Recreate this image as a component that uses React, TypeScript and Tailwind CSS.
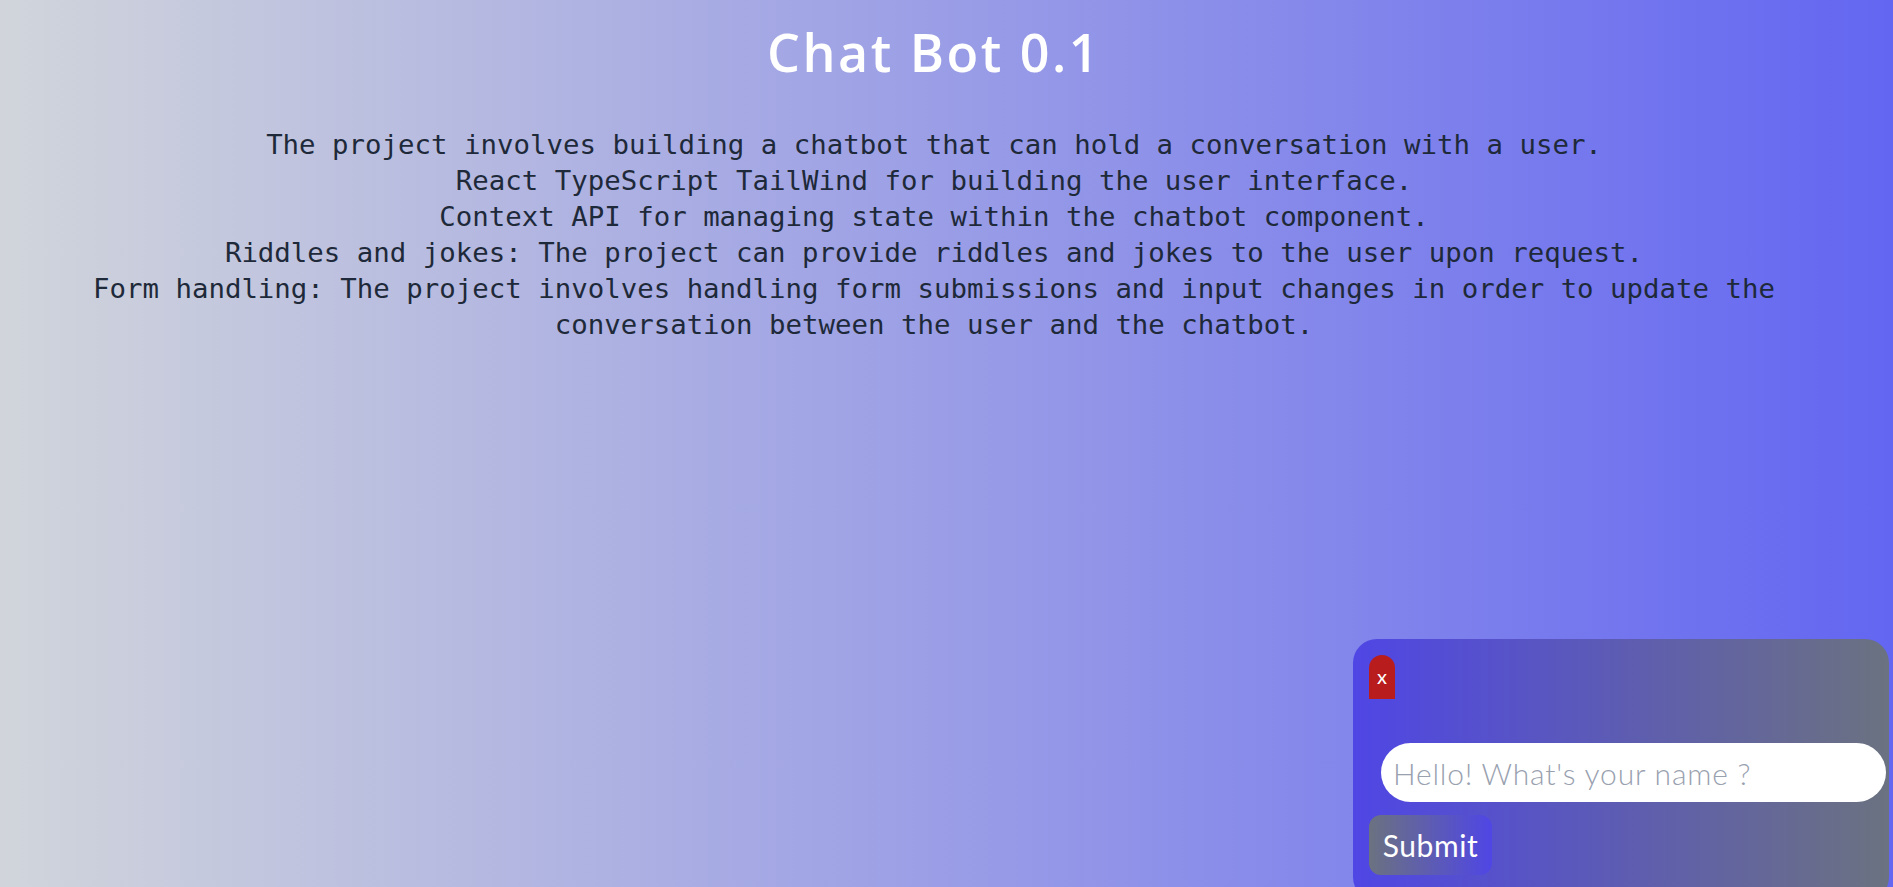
import { useState } from 'react';

const lines = [
  'The project involves building a chatbot that can hold a conversation with a user.',
  'React TypeScript TailWind for building the user interface.',
  'Context API for managing state within the chatbot component.',
  'Riddles and jokes: The project can provide riddles and jokes to the user upon request.',
  'Form handling: The project involves handling form submissions and input changes in order to update the conversation between the user and the chatbot.',
];

function ChatBox() {
  const [value, setValue] = useState('');

  return (
    <div className="fixed left-[1353px] top-[639px] w-[536px] h-[262px] rounded-3xl bg-[linear-gradient(to_right,#4f46e5,#6b7280)] p-4 font-['Lato','Open_Sans',sans-serif]">
      <button className="w-[26px] h-[44px] rounded-t-full bg-[#b91c1c] text-white text-xl leading-none flex items-center justify-center pb-0.5">
        x
      </button>
      <form
        className="mt-[44px] flex flex-col items-start"
        onSubmit={(e) => {
          e.preventDefault();
          setValue('');
        }}
      >
        <input
          value={value}
          onChange={(e) => setValue(e.target.value)}
          placeholder="Hello! What's your name ?"
          className="ml-3 w-[505px] h-[59px] shrink-0 rounded-full bg-white pl-3 pr-3.5 text-3xl font-light tracking-[0.8px] text-gray-700 placeholder:text-gray-400 outline-none"
        />
        <button
          type="submit"
          className="mt-[13px] h-[60px] w-[123px] rounded-xl bg-[linear-gradient(to_right,#6b7280,#4f46e5)] text-3xl tracking-[0.6px] text-white"
        >
          Submit
        </button>
      </form>
    </div>
  );
}

export default function App() {
  return (
    <div className="min-h-screen w-full bg-[linear-gradient(to_right,#d1d5db,#6366f1)] overflow-hidden">
      <div className="pr-[25px] text-center">
        <h1 className="pt-[26px] h-[78px] text-[52px] leading-none font-semibold tracking-[2.5px] text-white font-['Open_Sans','Noto_Sans',sans-serif]">
          Chat Bot 0.1
        </h1>
        <div className="mt-[49px] text-[27.4px] leading-[36px] text-gray-800 font-['DejaVu_Sans_Mono','Liberation_Mono',monospace]">
          {lines.map((l) => (
            <p key={l}>{l}</p>
          ))}
        </div>
      </div>
      <ChatBox />
    </div>
  );
}
